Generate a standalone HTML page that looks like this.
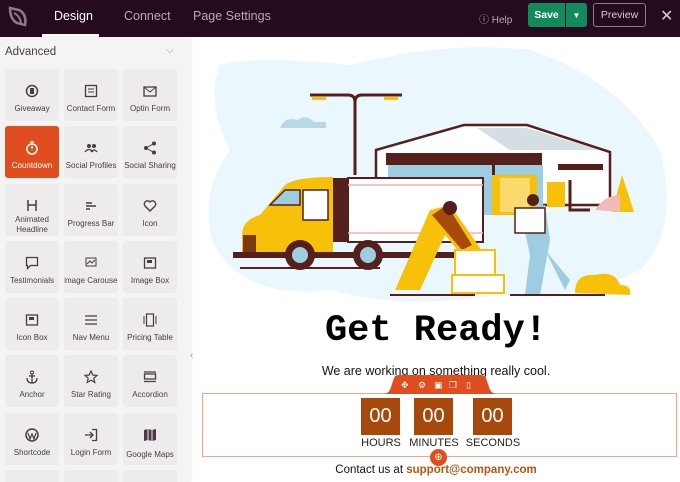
<!DOCTYPE html><html style="overflow:hidden;width:680px;height:482px"><head><style>
*{margin:0;padding:0;box-sizing:border-box}
body{width:680px;height:482px;overflow:hidden;background:#fff;font-family:"Liberation Sans",sans-serif;position:relative}
.top{position:absolute;left:0;top:0;width:680px;height:37px;background:#260b1e}
.top span{position:absolute;color:#b8aab4;font-size:12.5px;top:9px}
.side{position:absolute;left:0;top:37px;width:190px;height:445px;background:#f4f4f4;box-shadow:1px 0 3px rgba(0,0,0,.08)}
.tile{position:absolute;width:54px;height:52px;background:#edebec;border-radius:3px;text-align:center;font-size:8px;color:#4a3a45;line-height:10px;overflow:hidden}
.tile svg{position:absolute;left:20px;top:15px}
.tile .l{position:absolute;left:-3px;right:-3px;top:35px}
.on{background:#e04e1f;color:#fff}
.cd{position:absolute;top:398px;width:39px;height:37px;background:#a6490a;color:#fff;font-size:20px;text-align:center;line-height:37px}
.lb{position:absolute;top:437px;font-size:11px;color:#222;width:60px;text-align:center}
.btn{position:absolute;display:flex;align-items:center;justify-content:center;font-size:10.5px}
</style></head><body>
<div class="top">
<svg style="position:absolute;left:8px;top:5px" width="20" height="22" viewBox="0 0 20 22"><path d="M2 3 L11 5 Q19 9 17 20 L9 18 Q2 14 2 3Z" fill="none" stroke="#8a7d86" stroke-width="2.5"/><path d="M6 8 Q12 11 13 18" stroke="#8a7d86" stroke-width="2" fill="none"/></svg>
<span style="left:54px;color:#fff">Design</span>
<div style="position:absolute;left:42px;top:34px;width:57px;height:3px;background:#fff"></div>
<span style="left:124px">Connect</span>
<span style="left:193px">Page Settings</span>
<span style="left:479px;font-size:10px;top:11px">ⓘ Help</span>
<div class="btn" style="left:528px;top:3px;width:37px;height:24px;background:#138a5c;border-radius:3px 0 0 3px;color:#fff;font-weight:bold">Save</div>
<div class="btn" style="left:566px;top:3px;width:21px;height:24px;background:#138a5c;border-radius:0 3px 3px 0;color:#fff;font-size:8px">▼</div>
<div class="btn" style="left:593px;top:3px;width:53px;height:24px;border:1px solid #8a7d86;border-radius:3px;color:#d8ccd4">Preview</div>
<span style="left:660px;top:6px;font-size:16px;color:#d8ccd4">✕</span>
</div>
<div class="side">
<div style="position:absolute;left:5px;top:9px;font-size:11.5px;color:#4a3a45">Advanced</div>
<div style="position:absolute;left:166px;top:8px;font-size:10px;color:#998">⌵</div>
</div>
<div class="tile" style="left:5px;top:69px"><svg width="14" height="14"><circle cx="7" cy="7" r="5.5" fill="none" stroke="#4a3a45" stroke-width="1.5"/><rect x="5" y="4" width="4" height="6" fill="#4a3a45"/></svg><div class="l">Giveaway</div></div>
<div class="tile" style="left:64px;top:69px"><svg width="14" height="14"><rect x="1.5" y="1.5" width="11" height="11" fill="none" stroke="#4a3a45" stroke-width="1.3"/><path d="M4 5h6M4 8h6" stroke="#4a3a45"/></svg><div class="l">Contact Form</div></div>
<div class="tile" style="left:123px;top:69px"><svg width="14" height="14"><rect x="1" y="3" width="12" height="9" fill="none" stroke="#4a3a45" stroke-width="1.3"/><path d="M1 3l6 5 6-5" fill="none" stroke="#4a3a45"/></svg><div class="l">Optin Form</div></div>
<div class="tile on" style="left:5px;top:126px"><svg width="14" height="14"><circle cx="7" cy="8" r="5" fill="none" stroke="#fff" stroke-width="1.5"/><path d="M5 1h4M7 8V5" stroke="#fff" stroke-width="1.5"/></svg><div class="l">Countdown</div></div>
<div class="tile" style="left:64px;top:126px"><svg width="14" height="14"><circle cx="5" cy="5" r="2" fill="#4a3a45"/><circle cx="10" cy="5" r="2" fill="#4a3a45"/><path d="M1 11q4-5 8 0M7 11q3-4 6 0" fill="none" stroke="#4a3a45" stroke-width="1.3"/></svg><div class="l">Social Profiles</div></div>
<div class="tile" style="left:123px;top:126px"><svg width="14" height="14"><circle cx="11" cy="2.5" r="2" fill="#4a3a45"/><circle cx="3" cy="7" r="2" fill="#4a3a45"/><circle cx="11" cy="11.5" r="2" fill="#4a3a45"/><path d="M11 2.5L3 7l8 4.5" fill="none" stroke="#4a3a45"/></svg><div class="l">Social Sharing</div></div>
<div class="tile" style="left:5px;top:184px"><svg width="14" height="14"><path d="M3 1v11M11 1v11M3 6h8" stroke="#4a3a45" stroke-width="1.5"/></svg><div class="l" style="top:31px">Animated<br>Headline</div></div>
<div class="tile" style="left:64px;top:184px"><svg width="14" height="14"><path d="M2 4h6M2 7h10M2 10h4" stroke="#4a3a45" stroke-width="1.5"/></svg><div class="l">Progress Bar</div></div>
<div class="tile" style="left:123px;top:184px"><svg width="14" height="14"><path d="M7 12L2 7a3 3 0 015-4 3 3 0 015 4z" fill="none" stroke="#4a3a45" stroke-width="1.4"/></svg><div class="l">Icon</div></div>
<div class="tile" style="left:5px;top:241px"><svg width="14" height="14"><path d="M1.5 1.5h11v8h-7l-3 3v-3h-1z" fill="none" stroke="#4a3a45" stroke-width="1.3"/></svg><div class="l">Testimonials</div></div>
<div class="tile" style="left:64px;top:241px"><svg width="14" height="14"><rect x="2" y="2" width="10" height="8" fill="none" stroke="#4a3a45"/><path d="M3 8l3-3 2 2 3-3" fill="none" stroke="#4a3a45"/></svg><div class="l">Image Carousel</div></div>
<div class="tile" style="left:123px;top:241px"><svg width="14" height="14"><rect x="1.5" y="2" width="11" height="10" fill="none" stroke="#4a3a45" stroke-width="1.3"/><rect x="4" y="4" width="5" height="3" fill="#4a3a45"/></svg><div class="l">Image Box</div></div>
<div class="tile" style="left:5px;top:298px"><svg width="14" height="14"><rect x="1.5" y="2" width="11" height="10" fill="none" stroke="#4a3a45" stroke-width="1.3"/><rect x="4" y="4" width="5" height="3" fill="#4a3a45"/></svg><div class="l">Icon Box</div></div>
<div class="tile" style="left:64px;top:298px"><svg width="14" height="14"><path d="M1 3h12M1 7h12M1 11h12" stroke="#4a3a45" stroke-width="1.3"/></svg><div class="l">Nav Menu</div></div>
<div class="tile" style="left:123px;top:298px"><svg width="14" height="14"><rect x="3.5" y="1" width="7" height="12" fill="none" stroke="#4a3a45" stroke-width="1.2"/><path d="M1 3v8M13 3v8" stroke="#4a3a45"/></svg><div class="l">Pricing Table</div></div>
<div class="tile" style="left:5px;top:355px"><svg width="14" height="14"><circle cx="7" cy="2.5" r="1.5" fill="none" stroke="#4a3a45"/><path d="M7 4v9M4 6h6M2 8q0 5 5 5 5 0 5-5" fill="none" stroke="#4a3a45" stroke-width="1.3"/></svg><div class="l">Anchor</div></div>
<div class="tile" style="left:64px;top:355px"><svg width="14" height="14"><path d="M7 1l1.8 4 4.2.4-3.2 2.8 1 4.2L7 10.2 3.2 12.4l1-4.2L1 5.4l4.2-.4z" fill="none" stroke="#4a3a45" stroke-width="1.2"/></svg><div class="l">Star Rating</div></div>
<div class="tile" style="left:123px;top:355px"><svg width="14" height="14"><rect x="1.5" y="4" width="11" height="5" fill="none" stroke="#4a3a45" stroke-width="1.3"/><path d="M1 2h12M1 11.5h12" stroke="#4a3a45" stroke-width="1.3"/></svg><div class="l">Accordion</div></div>
<div class="tile" style="left:5px;top:413px"><svg width="14" height="14"><circle cx="7" cy="7" r="6" fill="none" stroke="#4a3a45" stroke-width="1.5"/><path d="M3 5l2 6 2-5 2 5 2-6" fill="none" stroke="#4a3a45" stroke-width="1.2"/></svg><div class="l">Shortcode</div></div>
<div class="tile" style="left:64px;top:413px"><svg width="14" height="14"><path d="M8 1.5h4.5v11H8M1 7h8M6 4l3 3-3 3" fill="none" stroke="#4a3a45" stroke-width="1.3"/></svg><div class="l">Login Form</div></div>
<div class="tile" style="left:123px;top:413px"><svg width="14" height="14"><path d="M1 2l4-1 4 1 4-1v11l-4 1-4-1-4 1z" fill="#4a3a45"/><path d="M5 1v11M9 2v11" stroke="#edebec"/></svg><div class="l" style="top:37px">Google Maps</div></div>
<div class="tile" style="left:5px;top:470px;height:12px;border-radius:3px 3px 0 0"></div><div class="tile" style="left:64px;top:470px;height:12px;border-radius:3px 3px 0 0"></div><div class="tile" style="left:123px;top:470px;height:12px;border-radius:3px 3px 0 0"></div>
<div style="position:absolute;left:190px;top:350px;font-size:10px;color:#999">‹</div>

<svg style="position:absolute;left:200px;top:40px" width="480" height="280" viewBox="0 0 480 280">
<path d="M20 25 Q60 15 150 25 Q250 0 330 10 Q420 40 460 110 Q480 190 440 230 Q380 260 300 255 Q200 270 130 250 Q40 260 12 200 Q0 150 30 110 Q5 60 20 25Z" fill="#eaf7fd"/>
<path d="M80 88 q5-12 18-8 q8-6 16 2 h12 v6 h-50z" fill="#b9d8e6"/>
<path d="M155 135 V62 M110 55 h38 q7 0 7 7 q0-7 7-7 h40" stroke="#55201c" stroke-width="3" fill="none"/>
<rect x="112" y="57" width="14" height="3" fill="#f7c10a"/><rect x="184" y="57" width="14" height="3" fill="#f7c10a"/>
<path d="M176 110 L264 85 L327 85 L410 112 V165 H176Z" fill="#fff" stroke="#55201c" stroke-width="2.5"/>
<path d="M277 88 L327 88 L400 110 H310Z" fill="#d5dfe3"/>
<rect x="186" y="113" width="156" height="12" fill="#55201c"/>
<rect x="188" y="125" width="155" height="50" fill="#9ccde0"/>
<rect x="292" y="125" width="3" height="50" fill="#55201c"/>
<rect x="358" y="124" width="45" height="6" fill="#55201c"/>
<rect x="292" y="135" width="45" height="40" fill="#f7c10a"/><rect x="300" y="138" width="30" height="34" fill="#fff" opacity=".4"/>
<rect x="347" y="142" width="18" height="25" fill="#f7c10a"/>
<path d="M370 140 v30 h20" stroke="#55201c" stroke-width="3" fill="none"/>
<path d="M422 135 l12 37 h-22z" fill="#f7c10a"/><path d="M395 170 q10-15 25-15 v17z" fill="#f2b9b9"/>
<rect x="148" y="138" width="135" height="64" fill="#fff" stroke="#55201c" stroke-width="2"/>
<path d="M148 145h135M148 193h135" stroke="#f2b0b0" stroke-width="1.5"/>
<rect x="133" y="138" width="15" height="64" fill="#55201c"/>
<path d="M42 215 V195 Q42 180 60 175 L85 145 Q95 137 133 137 V215Z" fill="#f7c10a"/>
<path d="M70 165 L85 150 H100 V165Z" fill="#9ccde0" stroke="#55201c" stroke-width="1.5"/>
<rect x="103" y="150" width="25" height="30" fill="#fff" stroke="#55201c" stroke-width="1.5"/>
<rect x="43" y="195" width="13" height="18" fill="#7a3a10"/>
<rect x="33" y="212" width="250" height="6" fill="#55201c"/>
<circle cx="100" cy="215" r="15" fill="#55201c"/><circle cx="100" cy="215" r="8" fill="#9ccde0"/>
<circle cx="168" cy="215" r="15" fill="#55201c"/><circle cx="168" cy="215" r="8" fill="#9ccde0"/>
<path d="M40 228h140" stroke="#55201c" stroke-width="2"/>
<path d="M230 170 l20-5 35 50 -15 10 -25-30 -25 55 -25 0z" fill="#f7c10a"/>
<path d="M232 175 l15-10 25 40 -10 5z" fill="#a6490a"/>
<circle cx="250" cy="168" r="7" fill="#55201c"/>
<rect x="255" y="210" width="40" height="25" fill="#fff" stroke="#f7c10a" stroke-width="2"/>
<rect x="252" y="235" width="52" height="18" fill="#fff" stroke="#f7c10a" stroke-width="2"/>
<path d="M320 170 l25 -5 5 35 -10 55 -15 0 5-40z" fill="#9ccde0"/>
<path d="M315 168 h30 v25 h-30z" fill="#fff" stroke="#55201c" stroke-width="1.5"/>
<circle cx="333" cy="160" r="6" fill="#55201c"/>
<path d="M345 210 l25 30 -5 10z" fill="#9ccde0"/>
<path d="M375 253 q0-20 20-18 q20-5 25 10 q12 0 10 10z" fill="#f7c10a"/>
<path d="M190 255h85M310 255h95" stroke="#55201c" stroke-width="2"/>
</svg>

<div style="position:absolute;left:192px;width:488px;top:310px;text-align:center;font-family:'Liberation Mono',monospace;font-weight:bold;font-size:37px;color:#000">Get Ready!</div>
<div style="position:absolute;left:192px;width:488px;top:364px;text-align:center;font-size:12.5px;color:#111">We are working on something really cool.</div>
<div style="position:absolute;left:202px;top:393px;width:475px;height:64px;border:1.5px solid #f3a28b"></div>
<svg style="position:absolute;left:383px;top:375px" width="114" height="19"><path d="M0 19 Q6 19 8 12 L11 3 Q12 0 16 0 H98 Q102 0 103 3 L106 12 Q108 19 114 19Z" fill="#e04e1f"/>
<g fill="#fff" font-size="9" font-family="DejaVu Sans"><text x="18" y="13">✥</text><text x="35" y="13">⚙</text><text x="51" y="13">▣</text><text x="66" y="13">❐</text><text x="83" y="13">▯</text></g></svg>
<div class="cd" style="left:361px">00</div><div class="cd" style="left:414px">00</div><div class="cd" style="left:473px">00</div>
<div class="lb" style="left:351px">HOURS</div><div class="lb" style="left:404px">MINUTES</div><div class="lb" style="left:463px">SECONDS</div>
<div style="position:absolute;left:430px;top:449px;width:17px;height:17px;border-radius:50%;background:#e04e1f;color:#fff;font-size:10px;text-align:center;line-height:17px">⊕</div>
<div style="position:absolute;left:192px;width:488px;top:464px;text-align:center;font-size:11.5px;color:#111">Contact us at <b style="color:#b8560f">support@company.com</b></div>
</body></html>
